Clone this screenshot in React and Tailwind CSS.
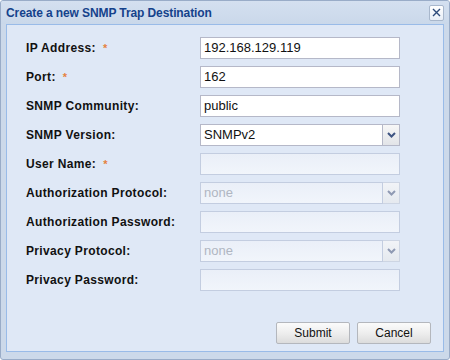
import React from "react";

const font = { fontFamily: '"Liberation Sans", Arial, sans-serif' };

function Chevron({ color }) {
  return (
    <svg width="9" height="6" viewBox="0 0 9 6">
      <path d="M1 1 L4.5 4.5 L8 1" fill="none" stroke={color} strokeWidth="2" />
    </svg>
  );
}

function Label({ text, req }) {
  return (
    <div className="w-[174px] shrink-0 text-[12px] font-bold tracking-[0.35px] text-[#111] flex items-center">
      <span>{text}</span>
      {req && <span className="ml-[7px] text-[11px] text-[#e5823f]">*</span>}
    </div>
  );
}

function TextField({ value, disabled }) {
  return (
    <div
      className={
        "w-[200px] h-[22px] border flex items-center px-[3px] text-[13px] " +
        (disabled
          ? "border-[#c3cde0] bg-gradient-to-b from-[#eaeff8] to-[#f1f5fb] text-[#a9b1bf]"
          : "border-[#b5b8c8] bg-white text-[#111]")
      }
    >
      {value}
    </div>
  );
}

function SelectField({ value, disabled }) {
  return (
    <div className="w-[200px] h-[22px] flex">
      <div
        className={
          "flex-1 border flex items-center px-[3px] text-[13px] " +
          (disabled
            ? "border-[#c3cde0] bg-gradient-to-b from-[#eaeff8] to-[#f1f5fb] text-[#b0b6c2]"
            : "border-[#b5b8c8] bg-white text-[#111]")
        }
      >
        {value}
      </div>
      <div
        className={
          "w-[17px] border border-l-0 flex items-center justify-center " +
          (disabled
            ? "border-[#cdd5e3] bg-gradient-to-b from-[#f1f3f7] to-[#e5e9ef]"
            : "border-[#b5b8c8] bg-gradient-to-b from-[#f7f7f7] to-[#e2e4e8]")
        }
      >
        <Chevron color={disabled ? "#8f9ab3" : "#3e5482"} />
      </div>
    </div>
  );
}

const rows = [
  { label: "IP Address:", req: true, type: "text", value: "192.168.129.119" },
  { label: "Port:", req: true, type: "text", value: "162" },
  { label: "SNMP Community:", type: "text", value: "public" },
  { label: "SNMP Version:", type: "select", value: "SNMPv2" },
  { label: "User Name:", req: true, type: "text", value: "", disabled: true },
  { label: "Authorization Protocol:", type: "select", value: "none", disabled: true },
  { label: "Authorization Password:", type: "text", value: "", disabled: true },
  { label: "Privacy Protocol:", type: "select", value: "none", disabled: true },
  { label: "Privacy Password:", type: "text", value: "", disabled: true },
];

function Button({ children }) {
  return (
    <div className="w-[74px] h-[22px] border border-[#b4b7bd] rounded-[2px] bg-gradient-to-b from-[#fbfbfb] via-[#eeeeee] to-[#dcdcdc] flex items-center justify-center text-[12px] text-[#111]">
      {children}
    </div>
  );
}

export default function App() {
  return (
    <div style={font} className="w-[450px] h-[360px] bg-[#ccd9ea] border border-[#99acc8] rounded-[3px] flex flex-col overflow-hidden">
      <div className="h-[23px] shrink-0 flex items-center justify-between pl-[5px] pr-[5px] bg-gradient-to-b from-[#d4e0f0] to-[#cad8ea]">
        <span className="text-[12px] font-bold tracking-[-0.1px] text-[#15428b]">Create a new SNMP Trap Destination</span>
        <div className="w-[15px] h-[16px] border border-[#a8b7cc] rounded-[2px] bg-gradient-to-b from-white to-[#e8eef7] flex items-center justify-center">
          <svg width="9" height="9" viewBox="0 0 9 9">
            <path d="M1 1 L8 8 M8 1 L1 8" stroke="#2c4a7a" strokeWidth="1.4" />
          </svg>
        </div>
      </div>
      <div className="mx-[5px] h-[328px] border border-[#99bbe8] bg-[#dfe8f6] flex flex-col">
        <div className="flex flex-col gap-[7px] pt-[12px] pl-[19px]">
          {rows.map((r) => (
            <div key={r.label} className="flex h-[22px]">
              <Label text={r.label} req={r.req} />
              {r.type === "text" ? (
                <TextField value={r.value} disabled={r.disabled} />
              ) : (
                <SelectField value={r.value} disabled={r.disabled} />
              )}
            </div>
          ))}
        </div>
        <div className="mt-auto mb-[7px] flex justify-end gap-[7px] pr-[12px]">
          <Button>Submit</Button>
          <Button>Cancel</Button>
        </div>
      </div>
    </div>
  );
}
